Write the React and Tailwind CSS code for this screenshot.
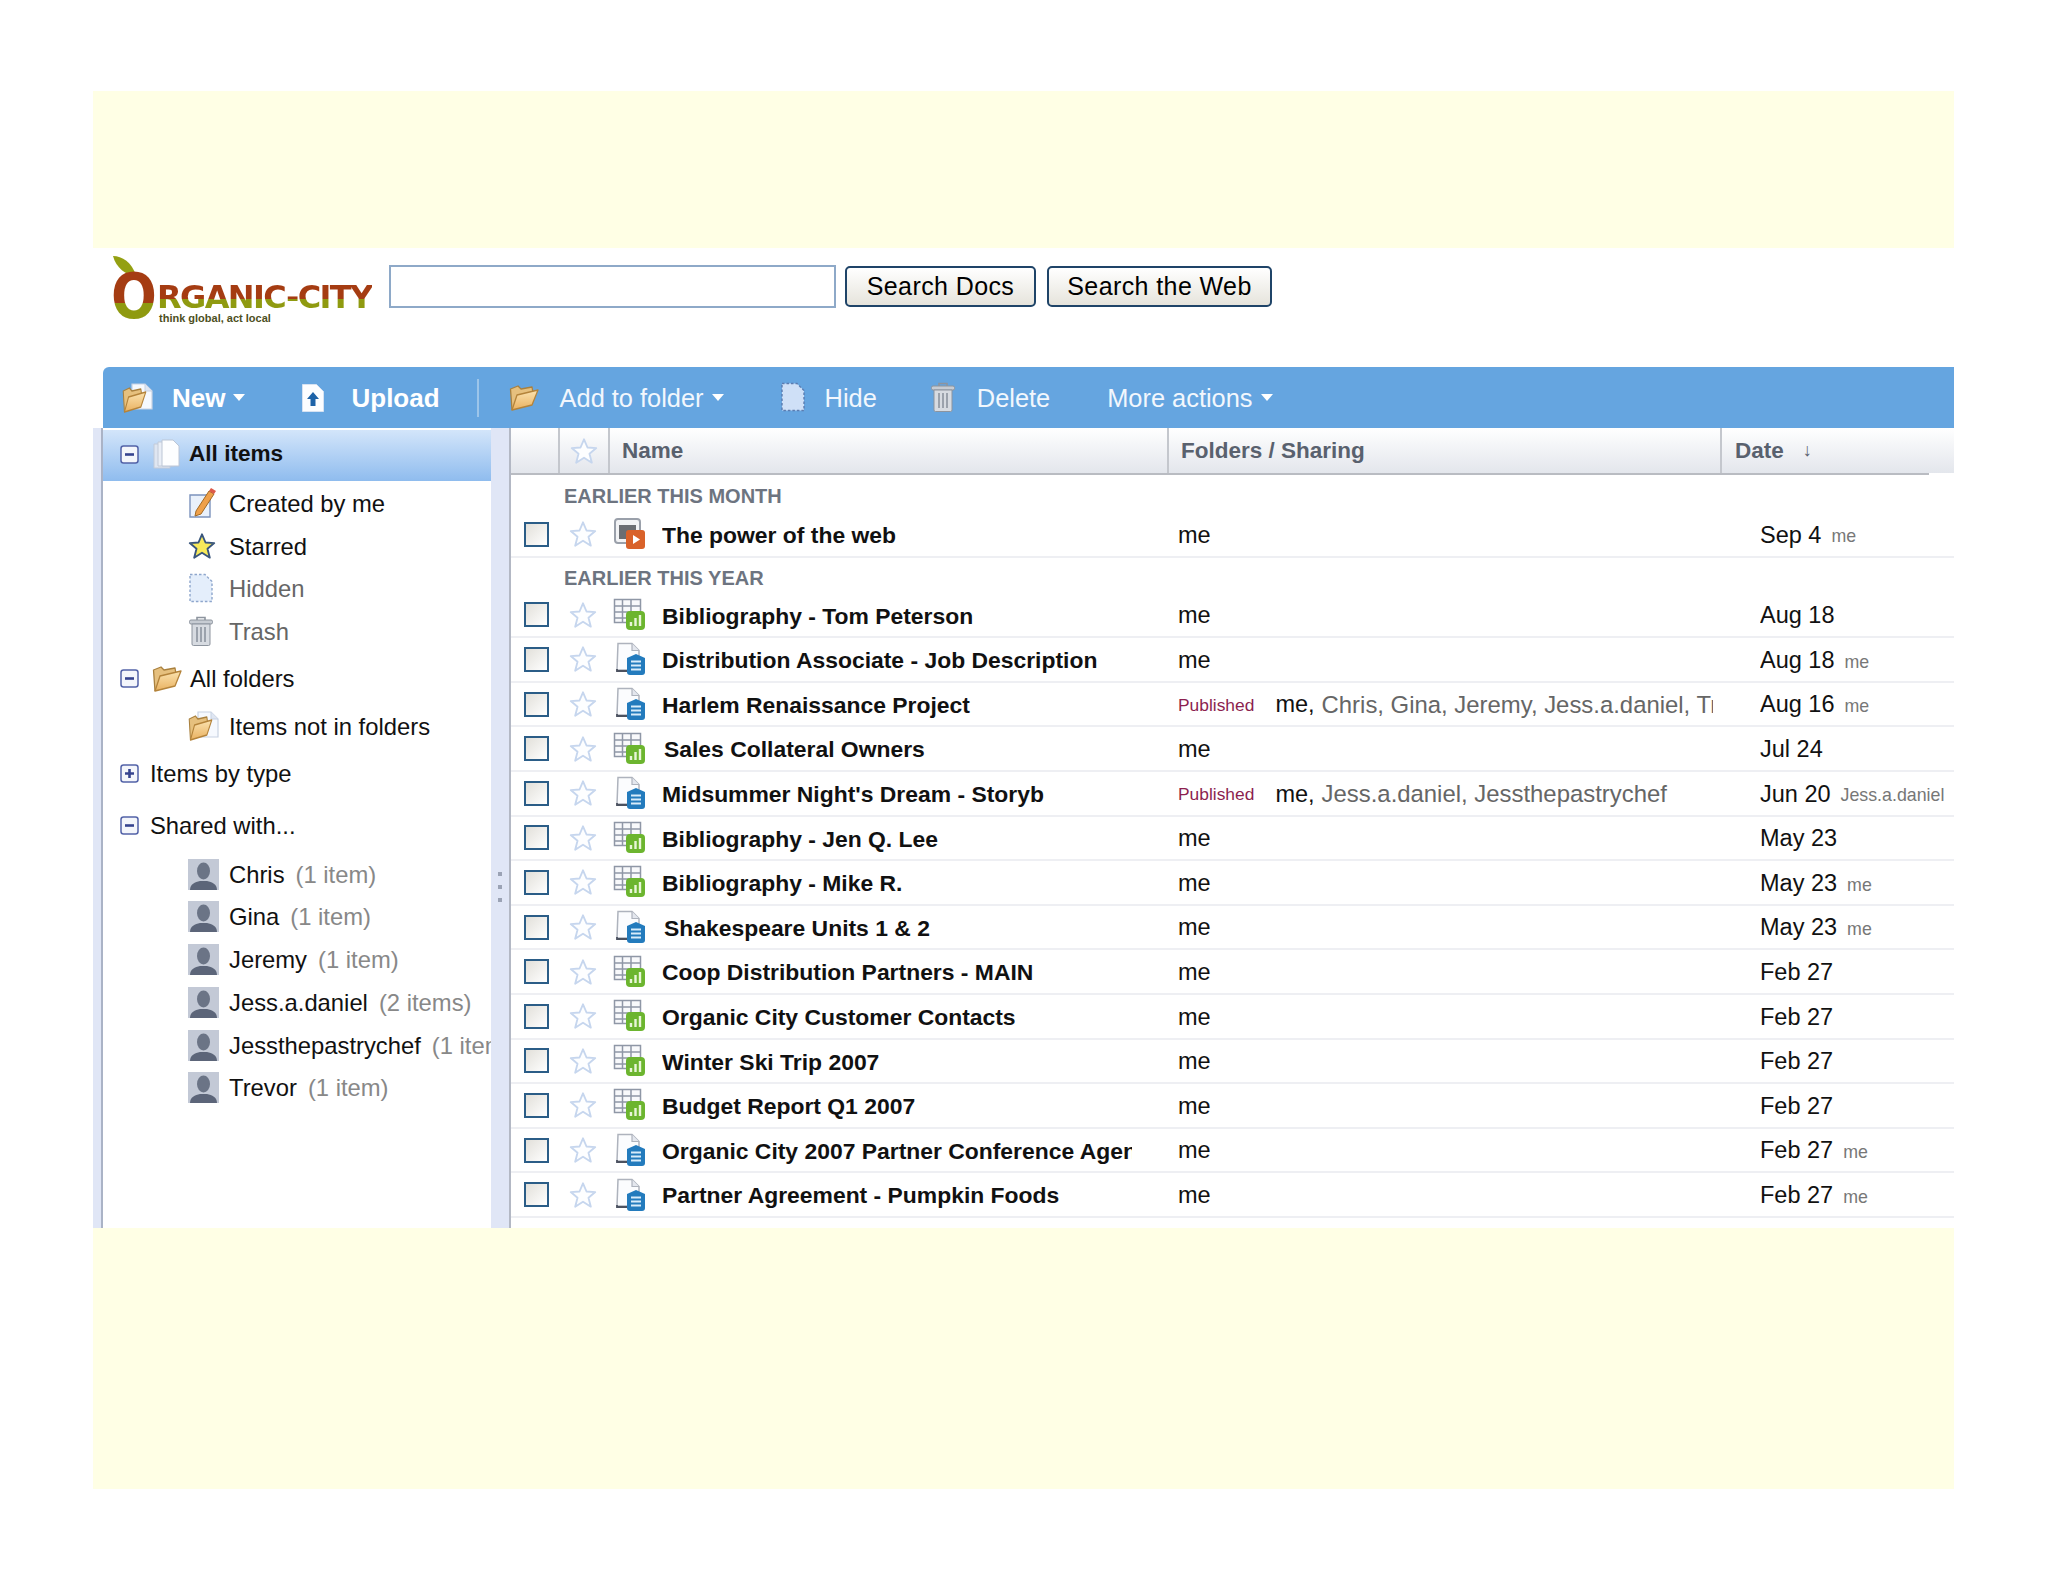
import React from "react";

const font = "font-['Liberation_Sans',Arial,sans-serif]";

function Star({ yellow }) {
  return (
    <svg width="28" height="28" viewBox="0 0 24 24">
      <polygon
        points="12,2 15,9 22.5,9.5 16.7,14.3 18.7,22 12,17.8 5.3,22 7.3,14.3 1.5,9.5 9,9"
        fill={yellow ? "#f8ea5a" : "#fdfeff"}
        stroke={yellow ? "#39557c" : "#c6d6ee"}
        strokeWidth="1.6"
        strokeLinejoin="round"
      />
    </svg>
  );
}

function FileIcon({ type }) {
  if (type === "sheet") {
    return (
      <svg width="34" height="34" viewBox="0 0 34 34">
        <path d="M1.5 1.5h26v23h-26zM1.5 8h26M1.5 14h26M1.5 20h26M9.5 1.5v23M18 1.5v23" fill="#f8f9fb" stroke="#8f97a6" strokeWidth="1.5" />
        <rect x="13" y="13" width="19" height="19" rx="4" fill="#6cb52f" />
        <path d="M18 28v-4M22.5 28v-8M27 28V17" stroke="#e8f6d8" strokeWidth="2.4" />
      </svg>
    );
  }
  if (type === "slide") {
    return (
      <svg width="34" height="34" viewBox="0 0 34 34">
        <rect x="2" y="2" width="25" height="24" rx="3" fill="#f2f3f5" stroke="#9aa0aa" strokeWidth="2" />
        <rect x="6" y="8" width="17" height="14" fill="#6b6e73" />
        <rect x="13" y="13" width="19" height="19" rx="3" fill="#d9622a" />
        <path d="M20 18l7 4.5-7 4.5z" fill="#fff" />
      </svg>
    );
  }
  return (
    <svg width="34" height="34" viewBox="0 0 34 34">
      <path d="M5 1.5h14l7 7V28H4z" fill="#fbfcfe" stroke="#aeb3bd" strokeWidth="1.5" />
      <path d="M19 1.5v7h7" fill="#e4e7ee" stroke="#aeb3bd" strokeWidth="1.2" />
      <path d="M4 27v2h12" fill="none" stroke="#4c5260" strokeWidth="1.8" />
      <path d="M14 16l9-4 9 4v14a3 3 0 0 1-3 3H17a3 3 0 0 1-3-3z" fill="#237bbd" />
      <path d="M18 19.5h10M18 23.5h10M18 27.5h10" stroke="#d8ecfa" strokeWidth="2.2" />
    </svg>
  );
}

function TreeBox({ plus }) {
  return (
    <svg width="19" height="19" viewBox="0 0 19 19" className="shrink-0">
      <rect x="1" y="1" width="17" height="17" rx="2.5" fill="#f4f6fb" stroke="#5363a8" strokeWidth="1.5" />
      <path d={plus ? "M5 9.5h9M9.5 5v9" : "M5 9.5h9"} stroke="#36448f" strokeWidth="2.6" />
    </svg>
  );
}

function FolderShape() {
  return (
    <g>
      <defs>
        <linearGradient id="folderFront" x1="0" y1="0" x2="0" y2="1">
          <stop offset="0" stopColor="#fbe3b0" />
          <stop offset="1" stopColor="#e9b160" />
        </linearGradient>
      </defs>
      <path d="M3 27L1.5 6 9 3l3 3 11-2 1 6" fill="#e6c07e" stroke="#a9803e" strokeWidth="1.3" strokeLinejoin="round" />
      <path d="M3 27l5-15 21-5-6 15z" fill="url(#folderFront)" stroke="#b4833a" strokeWidth="1.3" strokeLinejoin="round" />
    </g>
  );
}

function FolderOpen() {
  return (
    <svg width="30" height="28" viewBox="0 0 30 28" className="shrink-0">
      <FolderShape />
    </svg>
  );
}

function FolderWithPage() {
  return (
    <svg width="32" height="30" viewBox="0 0 32 30" className="shrink-0">
      <path d="M10 1h13l7 7v18H10z" fill="#f6f9fe" stroke="#c8d2e2" strokeWidth="1.2" />
      <path d="M23 1v7h7" fill="#dfe6f2" stroke="#c8d2e2" />
      <g transform="translate(0 2) scale(.82 1)">
        <FolderShape />
      </g>
    </svg>
  );
}

function PagesIcon() {
  return (
    <svg width="28" height="30" viewBox="0 0 28 30" className="shrink-0">
      <path d="M2 5h16v24H2z" fill="#dfe6f1" stroke="#c2cad8" />
      <path d="M6 3h16v24H6z" fill="#e9eef6" stroke="#c2cad8" />
      <path d="M10 1h11l6 6v20H10z" fill="#fdfeff" stroke="#bcc6d6" />
    </svg>
  );
}

function PencilIcon() {
  return (
    <svg width="30" height="32" viewBox="0 0 30 32" className="shrink-0">
      <path d="M2 8h20v22H2z" fill="#eaf1fb" stroke="#7c93bd" strokeWidth="1.4" />
      <path d="M8 24L21 4l5 3-13 20-6 2z" fill="#efa04a" stroke="#a26a24" strokeWidth="1" />
      <path d="M21 4l2-3 5 3-2 3z" fill="#dd5a4a" />
    </svg>
  );
}

function HiddenIcon({ light }) {
  return (
    <svg width="26" height="30" viewBox="0 0 26 30" className="shrink-0">
      <path
        d="M2 1.5h15l7 7v20H2z"
        fill={light ? "#cfe0f7" : "#e4eefb"}
        stroke={light ? "#5b7cb0" : "#8ea6cc"}
        strokeWidth="1.4"
        strokeDasharray="2.5 2"
      />
    </svg>
  );
}

function TrashIcon() {
  return (
    <svg width="26" height="30" viewBox="0 0 26 30" className="shrink-0">
      <path d="M9 4V1.5h8V4" fill="none" stroke="#8d949e" strokeWidth="1.6" />
      <rect x="1.5" y="4" width="23" height="4" rx="1.5" fill="#c7ccd3" stroke="#8d949e" />
      <path d="M4 8h18v20a1.5 1.5 0 0 1-1.5 1.5h-15A1.5 1.5 0 0 1 4 28z" fill="#d7dbe1" stroke="#8d949e" />
      <path d="M9 11v15M13 11v15M17 11v15" stroke="#959ca7" strokeWidth="1.8" />
    </svg>
  );
}

function UploadIcon() {
  return (
    <svg width="24" height="30" viewBox="0 0 24 30" className="shrink-0">
      <path d="M1.5 1.5h14l7 7v20h-21z" fill="#fcfdff" stroke="#d6e2f2" />
      <path d="M12 9l6 7h-3.5v7h-5v-7H6z" fill="#1c62a8" />
    </svg>
  );
}

function Avatar() {
  return (
    <svg width="31" height="31" viewBox="0 0 31 31" className="shrink-0">
      <rect width="31" height="31" fill="#c3c9d6" />
      <ellipse cx="15.5" cy="12" rx="6.5" ry="8.5" fill="#6b7486" />
      <path d="M2 31c0-6 5-8 10-9h7c5 1 10 3 10 9z" fill="#5c6579" />
    </svg>
  );
}

function Caret() {
  return <span className="ml-[8px] inline-block size-0 border-x-[6px] border-t-[7px] border-x-transparent border-t-white" />;
}

const tree = [
  { h: "h-[44px]", indent: "pl-[85px]", icon: <PencilIcon />, label: "Created by me" },
  { h: "h-[42px]", indent: "pl-[85px]", icon: <Star yellow />, label: "Starred" },
  { h: "h-[42px]", indent: "pl-[85px]", icon: <HiddenIcon />, label: "Hidden", dim: true },
  { h: "h-[44px]", indent: "pl-[85px]", icon: <TrashIcon />, label: "Trash", dim: true },
  { h: "h-[50px]", box: "minus", icon: <FolderOpen />, label: "All folders" },
  { h: "h-[46px]", indent: "pl-[85px]", icon: <FolderWithPage />, label: "Items not in folders" },
  { h: "h-[48px]", box: "plus", label: "Items by type" },
  { h: "h-[56px]", box: "minus", label: "Shared with..." },
  { h: "h-[42px]", indent: "pl-[85px]", icon: <Avatar />, label: "Chris", count: "(1 item)" },
  { h: "h-[43px]", indent: "pl-[85px]", icon: <Avatar />, label: "Gina", count: "(1 item)" },
  { h: "h-[43px]", indent: "pl-[85px]", icon: <Avatar />, label: "Jeremy", count: "(1 item)" },
  { h: "h-[42px]", indent: "pl-[85px]", icon: <Avatar />, label: "Jess.a.daniel", count: "(2 items)" },
  { h: "h-[44px]", indent: "pl-[85px]", icon: <Avatar />, label: "Jessthepastrychef", count: "(1 item)" },
  { h: "h-[41px]", indent: "pl-[85px]", icon: <Avatar />, label: "Trevor", count: "(1 item)" },
];

const firstGroup = [{ type: "slide", name: "The power of the web", date: "Sep 4", by: "me" }];

const secondGroup = [
  { type: "sheet", name: "Bibliography - Tom Peterson", date: "Aug 18" },
  { type: "doc", name: "Distribution Associate - Job Description", date: "Aug 18", by: "me" },
  {
    type: "doc",
    name: "Harlem Renaissance Project",
    date: "Aug 16",
    by: "me",
    published: "Chris, Gina, Jeremy, Jess.a.daniel, Trevor",
  },
  { type: "sheet", name: "Sales Collateral Owners", date: "Jul 24", nudge: true },
  {
    type: "doc",
    name: "Midsummer Night's Dream - Storyb",
    date: "Jun 20",
    by: "Jess.a.daniel",
    published: "Jess.a.daniel, Jessthepastrychef",
  },
  { type: "sheet", name: "Bibliography - Jen Q. Lee", date: "May 23" },
  { type: "sheet", name: "Bibliography - Mike R.", date: "May 23", by: "me" },
  { type: "doc", name: "Shakespeare Units 1 & 2", date: "May 23", by: "me", nudge: true },
  { type: "sheet", name: "Coop Distribution Partners - MAIN", date: "Feb 27" },
  { type: "sheet", name: "Organic City Customer Contacts", date: "Feb 27" },
  { type: "sheet", name: "Winter Ski Trip 2007", date: "Feb 27" },
  { type: "sheet", name: "Budget Report Q1 2007", date: "Feb 27" },
  { type: "doc", name: "Organic City 2007 Partner Conference Agenda", date: "Feb 27", by: "me" },
  { type: "doc", name: "Partner Agreement - Pumpkin Foods", date: "Feb 27", by: "me" },
];

function DocRow({ row }) {
  return (
    <div className="flex h-[44.6px] items-center border-b-2 border-[#eeeff3] text-[23.5px] text-[#111]">
      <span className="ml-[13px] size-[25px] shrink-0 border-2 border-[#2b5d87] bg-linear-to-br from-[#e2e0da] to-white" />
      <span className="ml-[20px] flex w-[28px] shrink-0"><Star /></span>
      <span className="ml-[16px] flex w-[34px] shrink-0"><FileIcon type={row.type} /></span>
      <div className={`ml-[15px] w-[470px] shrink-0 overflow-hidden whitespace-nowrap pt-[2px] text-[22.9px] font-bold ${row.nudge ? "pl-[2px]" : ""}`}>
        {row.name}
      </div>
      <div className="ml-[46px] flex w-[535px] shrink-0 items-center overflow-hidden whitespace-nowrap pt-[2px]">
        {row.published && <span className="mr-[21px] text-[17.4px] text-[#8c1f50]">Published</span>}
        <span>me{row.published ? "," : ""}</span>
        {row.published && <span className="ml-[7px] text-[23.9px] text-[#666]">{row.published}</span>}
      </div>
      <div className="ml-[47px] flex flex-1 items-center overflow-hidden whitespace-nowrap pt-[2px]">
        <span>{row.date}</span>
        {row.by && <span className="ml-[10px] pt-[3px] text-[17.8px] text-[#777]">{row.by}</span>}
      </div>
    </div>
  );
}

function ToolItem({ icon, label, bold, caret, className }) {
  return (
    <div className={`flex items-center ${bold ? "text-[26px] font-bold text-white" : "text-[25.4px] text-[#f2f7fd]"} ${className}`}>
      {icon}
      <span className="pt-[1px]">{label}</span>
      {caret && <Caret />}
    </div>
  );
}

export default function App() {
  return (
    <div className={`min-h-screen bg-white pt-[91px] ${font}`}>
      <div className="ml-[93px] w-[1861px]">
        <div className="h-[157px] bg-[#ffffe5]" />

        {/* Logo and search */}
        <div className="flex h-[119px] items-start pl-[18px]">
          <div className="relative flex h-[90px] w-[278px] shrink-0 pt-[8px]">
            <svg width="26" height="22" viewBox="0 0 26 22" className="absolute left-[1px] top-[7px]">
              <path d="M1 1c9 0 19 6 23 20C14 20 4 13 1 1z" fill="#94a012" />
            </svg>
            <span className="mt-[9px] -mr-[10px] w-[54px] shrink-0 origin-left scale-x-[.87] bg-[linear-gradient(#a53c12_52%,#8f9a10_52%)] bg-clip-text font-['DejaVu_Sans',sans-serif] text-[62px] leading-[64px] font-bold text-transparent">
              O
            </span>
            <div className="mt-[27px] ml-[2px]">
              <div className="bg-[linear-gradient(#a53c12_56%,#8f9a10_56%)] bg-clip-text font-['DejaVu_Sans',sans-serif] text-[32px] leading-[29px] font-bold tracking-[-1.6px] whitespace-nowrap text-transparent">
                RGANIC-CITY
              </div>
              <div className="ml-[2px] text-[11px] leading-[12px] font-bold text-[#4d4f22]">think global, act local</div>
            </div>
          </div>
          <div className="mt-[17px] h-[43px] w-[447px] border-2 border-[#8ea9c8] bg-white" />
          <button className="mt-[18px] ml-[9px] h-[41px] w-[191px] rounded-[5px] border-2 border-[#1f4468] bg-linear-to-b from-white to-[#e6e4dc] text-[25px] tracking-[.4px] text-black">
            Search Docs
          </button>
          <button className="mt-[18px] ml-[11px] h-[41px] w-[225px] rounded-[5px] border-2 border-[#1f4468] bg-linear-to-b from-white to-[#e6e4dc] text-[25px] tracking-[.4px] text-black">
            Search the Web
          </button>
        </div>

        {/* Toolbar */}
        <div className="ml-[10px] flex h-[61px] items-center rounded-tl-[6px] bg-[#65a5e0]">
          <ToolItem bold caret label="New" className="ml-[19px]" icon={<span className="mr-[18px] flex"><FolderWithPage /></span>} />
          <ToolItem bold label="Upload" className="ml-[56px]" icon={<span className="mr-[26px] flex"><UploadIcon /></span>} />
          <span className="ml-[37px] h-[38px] w-[2px] bg-[#9cc5ea]" />
          <ToolItem caret label="Add to folder" className="ml-[30px]" icon={<span className="mr-[21px] flex"><FolderOpen /></span>} />
          <ToolItem label="Hide" className="ml-[56px]" icon={<span className="mr-[19px] flex"><HiddenIcon light /></span>} />
          <ToolItem label="Delete" className="ml-[53px]" icon={<span className="mr-[21px] flex"><TrashIcon /></span>} />
          <ToolItem caret label="More actions" className="ml-[57px]" />
        </div>

        <div className="flex h-[800px]">
          <div className="w-[10px] shrink-0 border-r-2 border-[#aab3c6] bg-[#e0e6f6]" />

          {/* Sidebar */}
          <div className="w-[388px] shrink-0 overflow-hidden bg-white pt-[2px] text-[23.8px] text-[#111]">
            <div className="flex h-[51px] items-center bg-linear-to-b from-[#d3e5fa] to-[#8fbcee] pb-[3px] pl-[17px] font-bold">
              <TreeBox />
              <span className="ml-[13px] flex"><PagesIcon /></span>
              <span className="ml-[9px] text-[22.6px]">All items</span>
            </div>
            {tree.map(t => (
              <div key={t.label} className={`flex items-center whitespace-nowrap ${t.h} ${t.indent || "pl-[17px]"}`}>
                {t.box && <TreeBox plus={t.box === "plus"} />}
                {t.box && !t.icon && <span className="w-[11px] shrink-0" />}
                {t.icon && <span className={`flex shrink-0 ${t.box ? "ml-[13px] w-[38px]" : "w-[41px]"}`}>{t.icon}</span>}
                <span className={`pt-[1px] ${t.dim ? "text-[#666]" : ""}`}>{t.label}</span>
                {t.count && <span className="ml-[11px] pt-[1px] text-[#888]">{t.count}</span>}
              </div>
            ))}
          </div>

          {/* Splitter */}
          <div className="flex w-[20px] shrink-0 flex-col items-center gap-[9px] border-r-2 border-[#b3b8c4] bg-[#e0e6f6] pt-[444px]">
            <span className="size-[4px] bg-[#9ba3b5]" />
            <span className="size-[4px] bg-[#9ba3b5]" />
            <span className="size-[4px] bg-[#9ba3b5]" />
          </div>

          {/* Document list */}
          <div className="min-w-0 flex-1 bg-white">
            <div className="flex h-[45px] bg-linear-to-b from-white to-[#e3e6ec] text-[22.5px] font-bold text-[#59616e]">
              <div className="w-[49px] shrink-0 border-r-2 border-[#c4c7cd]" />
              <div className="flex w-[50px] shrink-0 items-center justify-center border-r-2 border-[#c4c7cd]"><Star /></div>
              <div className="flex w-[559px] shrink-0 items-center border-r-2 border-[#c4c7cd] pl-[12px]">Name</div>
              <div className="flex w-[553px] shrink-0 items-center border-r-2 border-[#c4c7cd] pl-[12px]">Folders / Sharing</div>
              <div className="flex items-center pl-[13px]">
                Date
                <span className="ml-[19px] text-[18px] font-normal">↓</span>
              </div>
            </div>
            <div className="mr-[25px] h-[2px] bg-[#b9bcc2]" />

            <div className="h-[38px] pl-[53px] pt-[9px] text-[20px] leading-[24px] font-bold text-[#6d7480]">EARLIER THIS MONTH</div>
            {firstGroup.map(r => <DocRow key={r.name} row={r} />)}
            <div className="h-[36px] pl-[53px] pt-[8px] text-[20px] leading-[24px] font-bold text-[#6d7480]">EARLIER THIS YEAR</div>
            {secondGroup.map(r => <DocRow key={r.name} row={r} />)}
          </div>
        </div>

        <div className="h-[261px] bg-[#ffffe5]" />
      </div>
    </div>
  );
}
